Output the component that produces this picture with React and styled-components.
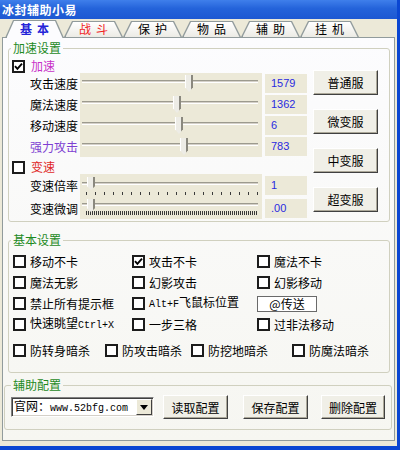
import styled, { createGlobalStyle } from 'styled-components';

const GlobalStyle = createGlobalStyle`
    html, body {
        margin: 0;
        padding: 0;
    }
    body {
        width: 400px;
        height: 450px;
        overflow: hidden;
        background: #ECE9D8;
        font-family: "Noto Sans CJK SC", "Liberation Sans", sans-serif;
        font-size: 12px;
        color: #000000;
    }
    * {
        box-sizing: border-box;
    }
`;

const tabs = [
    { name: '基本', color: '#2424D8', active: true },
    { name: '战斗', color: '#F01E1E' },
    { name: '保护' },
    { name: '物品' },
    { name: '辅助' },
    { name: '挂机' },
];

const speedRows = [
    { label: '攻击速度', value: '1579', pos: 105 },
    { label: '魔法速度', value: '1362', pos: 93 },
    { label: '移动速度', value: '6', pos: 95 },
    { label: '强力攻击', value: '783', pos: 100, color: '#7E3FD2' },
];

const serverButtons = ['普通服', '微变服', '中变服', '超变服'];

// pre + mono (half-width latin) + post
const basicOptions = [
    { pre: '移动不卡' },
    { pre: '攻击不卡', checked: true },
    { pre: '魔法不卡' },
    { pre: '魔法无影' },
    { pre: '幻影攻击' },
    { pre: '幻影移动' },
    { pre: '禁止所有提示框' },
    { mono: 'Alt+F', post: '飞鼠标位置' },
    { input: '@传送' },
    { pre: '快速眺望', mono: 'Ctrl+X' },
    { pre: '一步三格' },
    { pre: '过非法移动' },
];

const guardOptions = ['防转身暗杀', '防攻击暗杀', '防挖地暗杀', '防魔法暗杀'];

function Check ({ checked }) {
    return (
        <CheckBox>
            {checked && (
                <svg width="9" height="9" viewBox="0 0 9 9">
                    <path d="M1 4.2 L3.4 6.8 L8 1.6" stroke="#000000" strokeWidth="1.9" fill="none" />
                </svg>
            )}
        </CheckBox>
    );
}

function Slider ({ pos, ticks }) {
    const groove = ticks === 'sparse' ? 8 : ticks === 'dense' ? 6 : 7;
    const thumbTop = ticks === 'sparse' ? 3 : 2;
    const thumbHeight = ticks ? 13 : 17;

    return (
        <SliderBox>
            <Groove $top={groove} />
            {ticks === 'sparse' && <Ticks $top={18} $h={3} $step={9} />}
            {ticks === 'dense' && <Ticks $top={14} $h={4} $step={2} />}
            <Thumb $top={thumbTop} $h={thumbHeight} style={{ left: pos }} />
        </SliderBox>
    );
}

export default function App () {
    return (
        <Window>
            <GlobalStyle />
            <TitleBar>冰封辅助小易</TitleBar>
            <TabStrip>
                {tabs.map((tab) => (
                    <Tab key={tab.name} $active={tab.active} $color={tab.color}>
                        <span>{tab.name}</span>
                    </Tab>
                ))}
            </TabStrip>
            <Panel>
                <Group $ml={5} $mr={4} $pb={2}>
                    <Legend $ml={2}>加速设置</Legend>
                    <SpeedBody>
                        <SpeedRows>
                            <CheckRow $gap={6}>
                                <Check checked />
                                <Label $color="#C832C8">加速</Label>
                            </CheckRow>
                            {speedRows.map((row) => (
                                <SliderRow key={row.label} $h={21}>
                                    <RowLabel $color={row.color}>{row.label}</RowLabel>
                                    <Slider pos={row.pos} />
                                    <ValueBox>{row.value}</ValueBox>
                                </SliderRow>
                            ))}
                            <CheckRow $gap={6}>
                                <Check />
                                <Label $color="#E02828">变速</Label>
                            </CheckRow>
                            <SliderRow $h={23}>
                                <RowLabel>变速倍率</RowLabel>
                                <Slider pos={7} ticks="sparse" />
                                <ValueBox>1</ValueBox>
                            </SliderRow>
                            <SliderRow $h={22}>
                                <RowLabel>变速微调</RowLabel>
                                <Slider pos={7} ticks="dense" />
                                <ValueBox>.00</ValueBox>
                            </SliderRow>
                        </SpeedRows>
                        <ButtonColumn>
                            {serverButtons.map((name) => (
                                <Button key={name}>{name}</Button>
                            ))}
                        </ButtonColumn>
                    </SpeedBody>
                </Group>

                <Group $ml={5} $mr={4} $mt={10} $pb={11}>
                    <Legend $ml={2}>基本设置</Legend>
                    <OptionGrid>
                        {basicOptions.map((option, index) => option.input ? (
                            <OptionCell key={index}>
                                <TextInput>{option.input}</TextInput>
                            </OptionCell>
                        ) : (
                            <OptionCell key={index}>
                                <Check checked={option.checked} />
                                <Label>
                                    {option.pre}
                                    {option.mono && <Mono>{option.mono}</Mono>}
                                    {option.post}
                                </Label>
                            </OptionCell>
                        ))}
                    </OptionGrid>
                    <GuardRow>
                        {guardOptions.map((name) => (
                            <OptionCell key={name}>
                                <Check />
                                <Label>{name}</Label>
                            </OptionCell>
                        ))}
                    </GuardRow>
                </Group>

                <Group $ml={1} $mr={2} $mt={4} $pb={10}>
                    <Legend $ml={6}>辅助配置</Legend>
                    <ConfigRow>
                        <Combo>
                            <ComboText>官网：<Mono>www.52bfg.com</Mono></ComboText>
                            <ComboArrow>
                                <svg width="8" height="5" viewBox="0 0 8 5">
                                    <path d="M0 0 H8 L4 5 Z" fill="#000000" />
                                </svg>
                            </ComboArrow>
                        </Combo>
                        <Button $w={65} $h={24} $ml={9}>读取配置</Button>
                        <Button $w={65} $h={24} $ml={15}>保存配置</Button>
                        <Button $w={64} $h={24} $ml={13}>删除配置</Button>
                    </ConfigRow>
                </Group>
            </Panel>
        </Window>
    );
}

const Window = styled.div`
    width: 400px;
    height: 450px;
    display: flex;
    flex-direction: column;
    background: #ECE9D8;
    border-right: 3px solid #0A46D2;
    border-bottom: 4px solid #0A46D2;
`;

const TitleBar = styled.div`
    height: 19px;
    flex: none;
    padding-left: 2px;
    background: linear-gradient(180deg, #3F7FEB 0%, #2463DA 45%, #1D58D2 100%);
    color: #FFFFFF;
    font-size: 12px;
    font-weight: 700;
    letter-spacing: 0.5px;
    line-height: 19px;
`;

const TabStrip = styled.div`
    height: 18px;
    flex: none;
    display: flex;
    align-items: flex-end;
    padding-left: 5px;
`;

const Tab = styled.div`
    position: relative;
    width: 59px;
    height: ${({ $active }) => $active ? '18px' : '16px'};
    margin-bottom: ${({ $active }) => $active ? '-1px' : '0'};
    z-index: ${({ $active }) => $active ? 2 : 1};
    display: flex;
    align-items: center;
    justify-content: center;
    color: ${({ $color }) => $color || '#000000'};
    font-weight: ${({ $active }) => $active ? 700 : 400};

    & span {
        letter-spacing: 5px;
        padding-left: 5px;
        line-height: 14px;
    }

    &::before,
    &::after {
        content: '';
        position: absolute;
        z-index: -1;
    }

    &::before {
        inset: 0;
        background: #919B9C;
        clip-path: polygon(0 100%, 8px 0, calc(100% - 8px) 0, 100% 100%);
    }

    &::after {
        top: 1px;
        left: 1.5px;
        right: 1.5px;
        bottom: 0;
        background: ${({ $active }) => $active ? '#FCFCFE' : 'linear-gradient(180deg, #FFFFFF, #ECEBE5)'};
        clip-path: polygon(0 100%, 7.5px 0, calc(100% - 7.5px) 0, 100% 100%);
    }
`;

const Panel = styled.div`
    margin-left: 2px;
    width: 393px;
    height: 404px;
    flex: none;
    display: flex;
    flex-direction: column;
    padding-top: 2px;
    border: 1px solid #919B9C;
    background: linear-gradient(180deg, #FCFCFE 0%, #F6F6F1 100%);
`;

const Group = styled.fieldset`
    margin: ${({ $mt }) => $mt || 0}px ${({ $mr }) => $mr}px 0 ${({ $ml }) => $ml}px;
    padding: 0 0 ${({ $pb }) => $pb}px 0;
    border: 1px solid #D0D0BF;
    border-radius: 3px;
    min-width: 0;
`;

const Legend = styled.legend`
    margin-left: ${({ $ml }) => $ml}px;
    padding: 0 2px;
    color: #1E8A1E;
    line-height: 16px;
`;

const SpeedBody = styled.div`
    display: flex;
`;

const SpeedRows = styled.div`
    width: 298px;
    display: flex;
    flex-direction: column;
`;

const CheckRow = styled.div`
    height: 14px;
    margin-top: 3px;
    padding-left: 3px;
    display: flex;
    align-items: center;
    gap: ${({ $gap }) => $gap}px;
`;

const CheckBox = styled.span`
    width: 13px;
    height: 13px;
    flex: none;
    display: inline-flex;
    align-items: center;
    justify-content: center;
    border: 2px solid #1C1C1C;
    background: #FFFFFF;
`;

const Label = styled.span`
    color: ${({ $color }) => $color || '#000000'};
    white-space: nowrap;
    line-height: 14px;
`;

const Mono = styled.span`
    font-family: "Liberation Mono", monospace;
    font-size: 10px;
`;

const SliderRow = styled.div`
    height: ${({ $h }) => $h}px;
    padding-left: 21px;
    display: flex;
    align-items: center;
`;

const RowLabel = styled.span`
    width: 50px;
    flex: none;
    color: ${({ $color }) => $color || '#000000'};
    white-space: nowrap;
`;

const SliderBox = styled.div`
    position: relative;
    width: 182px;
    height: 100%;
    flex: none;
    background: #ECE9D8;
`;

const Groove = styled.div`
    position: absolute;
    left: 2px;
    right: 4px;
    top: ${({ $top }) => $top}px;
    height: 3px;
    border-top: 1px solid #9C9A8E;
    border-bottom: 1px solid #FFFFFF;
    background: #D4D0C8;
`;

const Ticks = styled.div`
    position: absolute;
    left: 6px;
    width: 172px;
    top: ${({ $top }) => $top}px;
    height: ${({ $h }) => $h}px;
    background: repeating-linear-gradient(90deg, #3A3A3A 0 1px, transparent 1px ${({ $step }) => $step}px);
`;

const Thumb = styled.div`
    position: absolute;
    top: ${({ $top }) => $top}px;
    width: 8px;
    height: ${({ $h }) => $h}px;
    background: linear-gradient(90deg, #FFFFFF 0 1px, #EDECE6 1px 6px, #8A887E 6px);
    clip-path: polygon(0 0, 100% 0, 100% 72%, 50% 100%, 0 72%);
`;

const ValueBox = styled.div`
    width: 42px;
    height: 19px;
    margin-left: 3px;
    flex: none;
    padding-left: 6px;
    background: #ECE9D8;
    color: #2A2AE0;
    font-family: "Liberation Sans", sans-serif;
    font-size: 11px;
    line-height: 19px;
`;

const ButtonColumn = styled.div`
    display: flex;
    flex-direction: column;
    gap: 14px;
    padding-top: 14px;
    margin-left: 6px;
`;

const Button = styled.button`
    width: ${({ $w }) => $w || 65}px;
    height: ${({ $h }) => $h || 25}px;
    margin-left: ${({ $ml }) => $ml || 0}px;
    flex: none;
    padding: 0;
    font: inherit;
    color: #000000;
    background: #F0EFE7;
    border: 1px solid;
    border-color: #FFFFFF #404040 #404040 #FFFFFF;
    box-shadow: inset -1px -1px 0 #ACA899;
`;

const OptionGrid = styled.div`
    display: grid;
    grid-template-columns: 119px 125px 1fr;
    grid-auto-rows: 21px;
    margin-top: 3px;
    padding-left: 4px;
`;

const OptionCell = styled.div`
    display: flex;
    align-items: center;
    gap: 4px;
`;

const TextInput = styled.div`
    width: 60px;
    height: 16px;
    border: 1px solid #6A6A6A;
    background: #FFFFFF;
    text-align: center;
    line-height: 14px;
`;

const GuardRow = styled.div`
    display: grid;
    grid-template-columns: 92px 86px 101px 1fr;
    height: 21px;
    margin-top: 5px;
    padding-left: 4px;
`;

const ConfigRow = styled.div`
    display: flex;
    align-items: center;
    height: 24px;
    margin-top: 2px;
    padding-left: 6px;
`;

const Combo = styled.div`
    width: 143px;
    height: 20px;
    flex: none;
    display: flex;
    align-items: center;
    justify-content: space-between;
    padding: 0 1px 0 2px;
    background: #FFFFFF;
    border: 1px solid;
    border-color: #808080 #FFFFFF #FFFFFF #808080;
    box-shadow: inset 1px 1px 0 #404040, inset -1px -1px 0 #D4D0C8;
`;

const ComboText = styled.span`
    white-space: nowrap;
    line-height: 16px;
`;

const ComboArrow = styled.span`
    width: 16px;
    height: 16px;
    flex: none;
    display: flex;
    align-items: center;
    justify-content: center;
    background: #ECE9D8;
    border: 1px solid;
    border-color: #FFFFFF #404040 #404040 #FFFFFF;
`;
